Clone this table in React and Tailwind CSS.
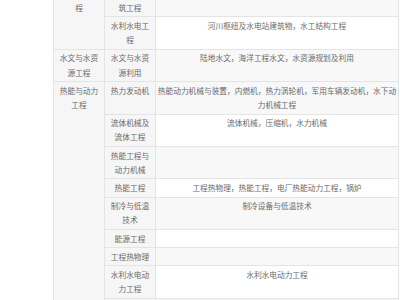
const rows = [
  { sub: '港口水工建筑工程', desc: '', shade: true },
  { sub: '水利水电工程', desc: '河川枢纽及水电站建筑物，水工结构工程', shade: false },
  { sub: '水文与水资源利用', desc: '陆地水文，海洋工程水文，水资源规划及利用', shade: true },
  { sub: '热力发动机', desc: '热能动力机械与装置，内燃机，热力涡轮机，军用车辆发动机，水下动力机械工程', shade: true },
  { sub: '流体机械及流体工程', desc: '流体机械，压缩机，水力机械', shade: false },
  { sub: '热能工程与动力机械', desc: '', shade: true },
  { sub: '热能工程', desc: '工程热物理，热能工程，电厂热能动力工程，锅炉', shade: false },
  { sub: '制冷与低温技术', desc: '制冷设备与低温技术', shade: true },
  { sub: '能源工程', desc: '', shade: false },
  { sub: '工程热物理', desc: '', shade: true },
  { sub: '水利水电动力工程', desc: '水利水电动力工程', shade: false },
  { sub: '化工过程机械', desc: '化工机械', shade: true },
];

// first column groups, keyed by the row where each one starts
const groups = {
  0: { label: '水利水电工程', span: 2 },
  2: { label: '水文与水资源工程', span: 1 },
  3: { label: '热能与动力工程', span: 9 },
};

const cell = 'border border-[#e4e4e4] align-top text-center py-[1.5px] leading-[14.2px]';

export default function App() {
  return (
    <div
      className="w-[400px] h-[300px] overflow-hidden bg-white text-[#6a6a6a] text-[7.7px]"
      style={{ fontFamily: '"Noto Sans CJK SC", "Noto Sans", sans-serif' }}
    >
      <table className="ml-[53px] -mt-[16px] w-[346px] table-fixed border-collapse">
        <colgroup>
          <col className="w-[51px]" />
          <col className="w-[51px]" />
          <col />
        </colgroup>
        <tbody>
          {rows.map((r, i) => (
            <tr key={i}>
              {groups[i] && (
                <td rowSpan={groups[i].span} className={`${cell} px-[2px] bg-[#f6f6f6]`}>
                  {groups[i].label}
                </td>
              )}
              <td className={`${cell} px-[2px] bg-[#f6f6f6]`}>{r.sub}</td>
              <td className={`${cell} px-0 ${r.shade ? 'bg-[#f8f8f8]' : 'bg-white'}`}>{r.desc}</td>
            </tr>
          ))}
        </tbody>
      </table>
    </div>
  );
}
